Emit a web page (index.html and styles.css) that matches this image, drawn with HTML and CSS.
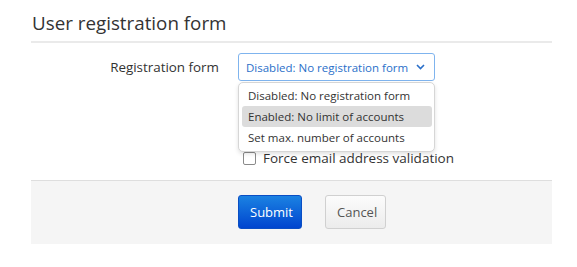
FILE: index.html
```html
<!DOCTYPE html>
<html>
<head>
<meta charset="utf-8">
<link rel="stylesheet" href="styles.css">
</head>
<body>
<div class="page">
  <h2 class="title">User registration form</h2>
  <div class="form-row">
    <label class="label">Registration form</label>
    <div class="select-wrap">
      <div class="select">
        <span>Disabled: No registration form</span>
        <svg class="chev" width="9" height="6" viewBox="0 0 9 6"><path d="M1 1 L4.5 4.5 L8 1" fill="none" stroke="#2a6fc9" stroke-width="1.6"/></svg>
      </div>
      <ul class="menu">
        <li class="item">Disabled: No registration form</li>
        <li class="item active">Enabled: No limit of accounts</li>
        <li class="item">Set max. number of accounts</li>
      </ul>
    </div>
  </div>
  <div class="check-row">
    <span class="checkbox"></span>
    <span class="check-label">Force email address validation</span>
  </div>
  <div class="footer">
    <button class="btn btn-primary">Submit</button>
    <button class="btn btn-default">Cancel</button>
  </div>
</div>
</body>
</html>
```
FILE: styles.css
```css
* { box-sizing: border-box; }
body {
  margin: 0;
  font-family: "Open Sans", "Noto Sans", sans-serif;
  color: #333;
  background: #fff;
}
.page {
  padding: 11px 25px 0 31px;
}
.title {
  margin: 0;
  font-size: 18.8px;
  font-weight: normal;
  color: #333;
  line-height: 24px;
  padding: 0 0 6px 1px;
  border-bottom: 2px solid #eaeaea;
}
.form-row {
  display: grid;
  grid-template-columns: 188px 197px;
  column-gap: 19px;
  margin-top: 10px;
  align-items: center;
}
.label {
  text-align: right;
  font-size: 13.4px;
  color: #333;
}
.select-wrap {
  position: relative;
}
.select {
  height: 28px;
  border: 1px solid #7fb4ee;
  border-radius: 3px;
  display: flex;
  align-items: center;
  justify-content: space-between;
  padding: 0 9px 0 7px;
  font-size: 11.5px;
  color: #2a6fc9;
  background: #fff;
}
.chev { display: block; }
.menu {
  position: absolute;
  top: 29px;
  left: 0;
  width: 197px;
  margin: 0;
  padding: 2px 2px 3px 3px;
  list-style: none;
  background: #fff;
  border: 1px solid #d6d6d6;
  border-radius: 5px;
  box-shadow: 0 2px 4px rgba(0,0,0,0.12);
  z-index: 2;
}
.item {
  height: 21px;
  line-height: 21px;
  padding: 0 6px;
  font-size: 11.5px;
  color: #333;
  border-radius: 3px;
  white-space: nowrap;
}
.item.active {
  background: #dcdcdc;
}
.check-row {
  display: flex;
  align-items: center;
  margin: 70px 0 0 212px;
  height: 14px;
}
.checkbox {
  width: 13px;
  height: 13px;
  border: 1px solid #8a8a8a;
  border-radius: 2px;
  background: #fff;
  margin-right: 7px;
}
.check-label {
  font-size: 13.5px;
  color: #333;
}
.footer {
  margin-top: 15px;
  height: 64px;
  background: #f5f5f5;
  border-top: 1px solid #dedede;
  display: flex;
  align-items: flex-start;
  gap: 23px;
  padding: 14px 0 0 207px;
}
.btn {
  height: 34px;
  font-family: inherit;
  font-size: 13px;
  border-radius: 3px;
  padding: 0 11px;
  cursor: pointer;
}
.btn-primary {
  width: 64px;
  color: #fff;
  background: linear-gradient(#1b82e2, #0045cf);
  border: 1px solid #0a4ec4;
}
.btn-default {
  width: 61px;
  color: #555;
  background: linear-gradient(#fcfcfc, #ececec);
  border: 1px solid #d0d0d0;
}
```
